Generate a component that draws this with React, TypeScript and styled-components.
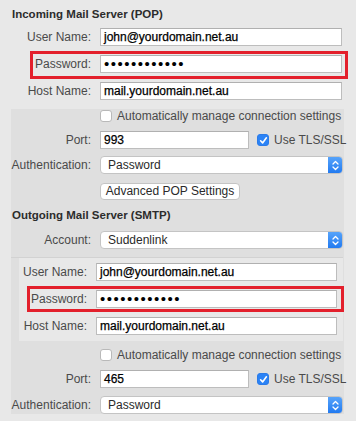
import styled, { createGlobalStyle } from "styled-components";

const GlobalStyle = createGlobalStyle`
  body {
    margin: 0;
    background: #e8e8e8;
    font-family: "Liberation Sans", Arial, sans-serif;
    font-size: 12px;
    color: #4a4a4a;
  }
`;

const Window = styled.div`
  width: 356px;
  height: 421px;
  box-sizing: border-box;
  padding-top: 7px;
  overflow: hidden;
`;

const SectionTitle = styled.div<{ $indent: number; $mt?: number }>`
  font-size: 11.5px;
  font-weight: bold;
  line-height: 14px;
  color: #2c2c2c;
  padding-left: ${(p) => p.$indent}px;
  margin-top: ${(p) => p.$mt ?? 0}px;
`;

const Fields = styled.div`
  padding-right: 14px;
`;

const Panel = styled.div`
  margin: 9px 12px 0 11px;
  background: #dfdfdf;
  padding: 0 1px 0 0;
`;

const InnerPanel = styled.div`
  margin-left: 8px;
  background: #e8e8e8;
  padding: 5px 6px 6px 0;
`;

const Divider = styled.div`
  height: 1px;
  margin-top: 8px;
  background: #d2d2d2;
`;

const Row = styled.div<{ $label: number; $mt: number }>`
  position: relative;
  display: grid;
  grid-template-columns: ${(p) => p.$label}px 1fr;
  column-gap: 9px;
  align-items: center;
  margin-top: ${(p) => p.$mt}px;
`;

// red annotation frame drawn over a row
const Highlight = styled.div<{ $inset: string }>`
  position: absolute;
  inset: ${(p) => p.$inset};
  border: 3px solid #e3202c;
  pointer-events: none;
`;

const Label = styled.span`
  text-align: right;
  white-space: nowrap;
  line-height: 14px;
`;

const TextField = styled.div<{ $width?: number }>`
  box-sizing: border-box;
  height: 18px;
  width: ${(p) => (p.$width ? `${p.$width}px` : "auto")};
  background: #fff;
  border: 1px solid #bdbdbd;
  border-top-color: #b0b0b0;
  padding: 0 3px;
  line-height: 16px;
  color: #000;
  -webkit-text-stroke: 0.25px #000;
  white-space: nowrap;
  overflow: hidden;
`;

const Dots = styled.span`
  font-size: 15px;
  letter-spacing: 1.5px;
  line-height: 16px;
  -webkit-text-stroke: 0;
`;

const Popup = styled.div`
  box-sizing: border-box;
  height: 18px;
  display: flex;
  align-items: center;
  background: #fff;
  border: 1px solid #c4c4c4;
  border-radius: 4px;
  padding-left: 7px;
  color: #2a2a2a;
  overflow: hidden;
`;

const PopupText = styled.span`
  flex: 1;
  line-height: 16px;
`;

const Stepper = styled.span`
  width: 15px;
  align-self: stretch;
  margin: -1px -1px -1px 0;
  border-radius: 0 4px 4px 0;
  background: linear-gradient(#5aa6fb, #1f78f0);
  display: flex;
  align-items: center;
  justify-content: center;
`;

const Button = styled.div`
  box-sizing: border-box;
  width: 140px;
  height: 17px;
  background: #fff;
  border: 1px solid #c4c4c4;
  border-radius: 4px;
  text-align: center;
  line-height: 15px;
  color: #2a2a2a;
`;

const Inline = styled.div`
  display: flex;
  align-items: center;
`;

const CheckBox = styled.span<{ $checked?: boolean }>`
  box-sizing: border-box;
  width: 12px;
  height: 12px;
  flex: none;
  border-radius: 3px;
  background: ${(p) => (p.$checked ? "#2b83f6" : "#fff")};
  border: 1px solid ${(p) => (p.$checked ? "#2b7be8" : "#b9b9b9")};
  display: flex;
  align-items: center;
  justify-content: center;
`;

const CheckText = styled.span<{ $ml: number }>`
  margin-left: ${(p) => p.$ml}px;
  white-space: nowrap;
  line-height: 14px;
`;

const StepperIcon = () => (
  <svg width="7" height="11" viewBox="0 0 7 11">
    <path d="M1 4 L3.5 1.5 L6 4 M1 7 L3.5 9.5 L6 7" fill="none" stroke="#fff" strokeWidth="1.3" strokeLinecap="round" strokeLinejoin="round" />
  </svg>
);

const CheckMark = () => (
  <svg width="9" height="9" viewBox="0 0 9 9">
    <path d="M1.6 4.8 L3.6 6.9 L7.4 1.8" fill="none" stroke="#fff" strokeWidth="1.6" strokeLinecap="round" strokeLinejoin="round" />
  </svg>
);

const Password = () => <Dots>{"•".repeat(12)}</Dots>;

const Select = ({ value }: { value: string }) => (
  <Popup>
    <PopupText>{value}</PopupText>
    <Stepper>
      <StepperIcon />
    </Stepper>
  </Popup>
);

const PortControl = ({ port }: { port: string }) => (
  <Inline>
    <TextField $width={149}>{port}</TextField>
    <CheckBox $checked style={{ marginLeft: 8 }}>
      <CheckMark />
    </CheckBox>
    <CheckText $ml={5}>Use TLS/SSL</CheckText>
  </Inline>
);

const AutoManage = ({ mt }: { mt: number }) => (
  <Row $label={80} $mt={mt}>
    <span />
    <Inline>
      <CheckBox />
      <CheckText $ml={5}>Automatically manage connection settings</CheckText>
    </Inline>
  </Row>
);

export default function App() {
  return (
    <Window>
      <GlobalStyle />
      <SectionTitle $indent={12}>Incoming Mail Server (POP)</SectionTitle>
      <Fields>
        <Row $label={91} $mt={7}>
          <Label>User Name:</Label>
          <TextField>john@yourdomain.net.au</TextField>
        </Row>
        <Row $label={91} $mt={9}>
          <Highlight $inset="-4px -6px -6px 30px" />
          <Label>Password:</Label>
          <TextField>
            <Password />
          </TextField>
        </Row>
        <Row $label={91} $mt={9}>
          <Label>Host Name:</Label>
          <TextField>mail.yourdomain.net.au</TextField>
        </Row>
      </Fields>

      <Panel>
        <AutoManage mt={1} />
        <Row $label={80} $mt={8}>
          <Label>Port:</Label>
          <PortControl port="993" />
        </Row>
        <Row $label={80} $mt={7}>
          <Label>Authentication:</Label>
          <Select value="Password" />
        </Row>
        <Row $label={80} $mt={9}>
          <span />
          <Button>Advanced POP Settings</Button>
        </Row>

        <SectionTitle $indent={1} $mt={8}>
          Outgoing Mail Server (SMTP)
        </SectionTitle>
        <Row $label={80} $mt={9}>
          <Label>Account:</Label>
          <Select value="Suddenlink" />
        </Row>
        <Divider />

        <InnerPanel>
          <Row $label={68} $mt={0}>
            <Label>User Name:</Label>
            <TextField>john@yourdomain.net.au</TextField>
          </Row>
          <Row $label={68} $mt={9}>
            <Highlight $inset="-4px -7px -4px 8px" />
            <Label>Password:</Label>
            <TextField>
              <Password />
            </TextField>
          </Row>
          <Row $label={68} $mt={9}>
            <Label>Host Name:</Label>
            <TextField>mail.yourdomain.net.au</TextField>
          </Row>
        </InnerPanel>

        <AutoManage mt={7} />
        <Row $label={80} $mt={8}>
          <Label>Port:</Label>
          <PortControl port="465" />
        </Row>
        <Row $label={80} $mt={8}>
          <Label>Authentication:</Label>
          <Select value="Password" />
        </Row>
      </Panel>
    </Window>
  );
}
